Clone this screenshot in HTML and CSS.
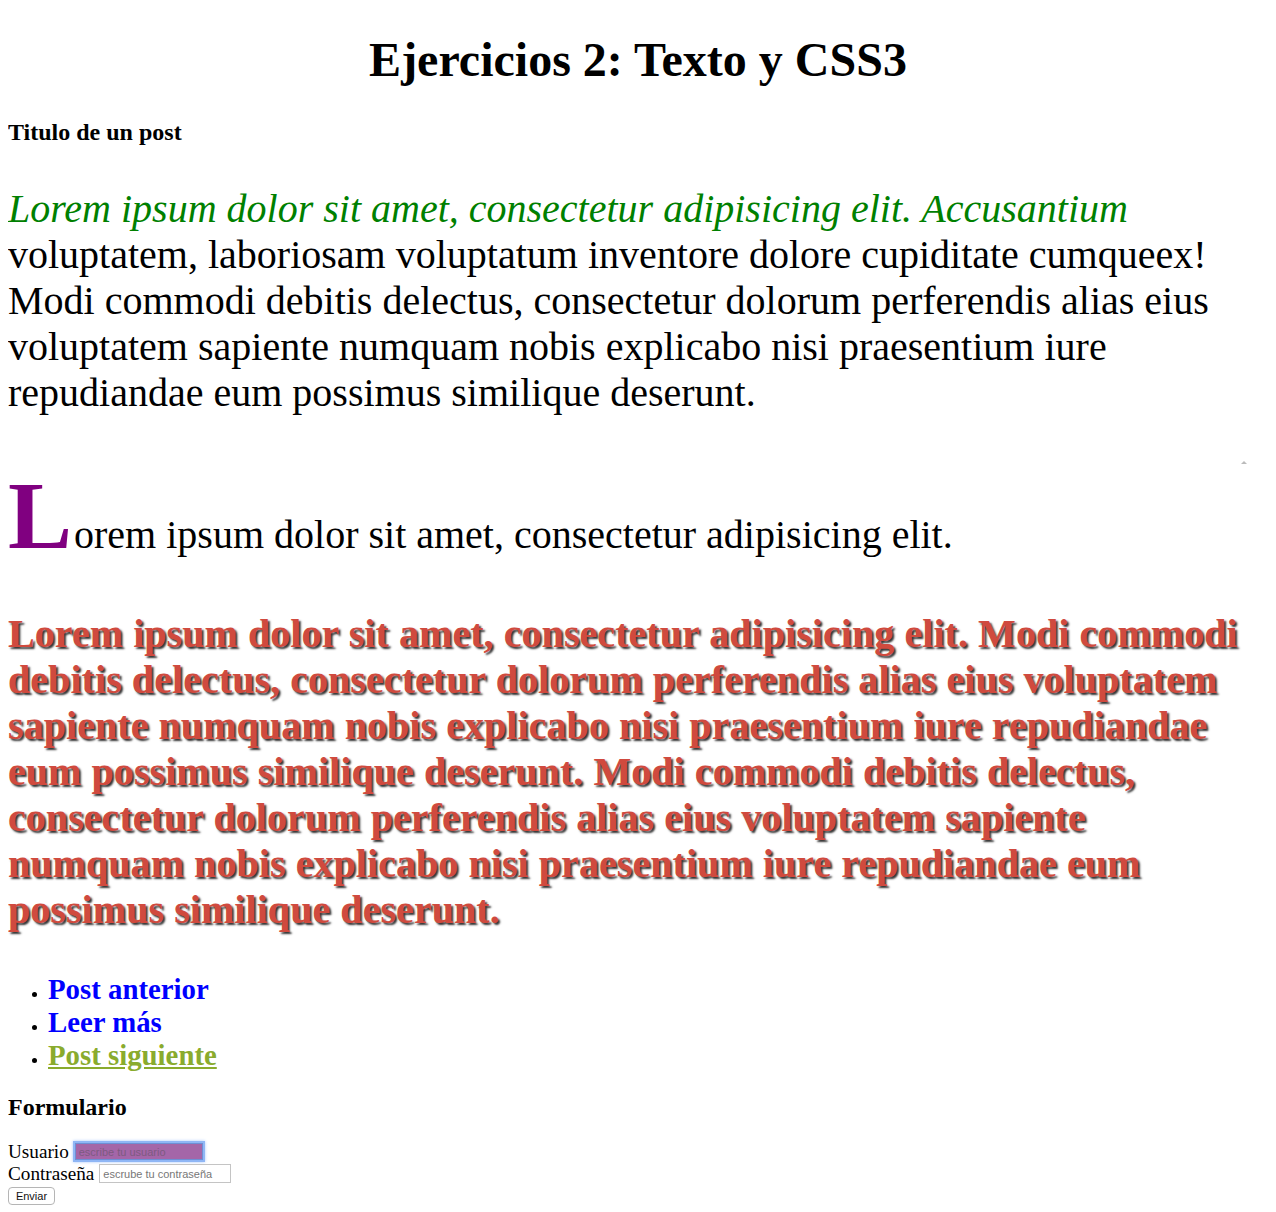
FILE: index.html
```html
<!DOCTYPE html>
<html lang="es">
<head>
<meta charset="utf-8">
<title>Ejercicios 2: Texto y CSS3</title>
<link rel="stylesheet" href="styles.css">
</head>
<body>
<h1 class="titulo">Ejercicios 2: Texto y CSS3</h1>
<h2 class="subtitulo">Titulo de un post</h2>
<p class="parrafo primera-linea">Lorem ipsum dolor sit amet, consectetur adipisicing elit. Accusantium voluptatem, laboriosam voluptatum inventore dolore cupiditate cumqueex! Modi commodi debitis delectus, consectetur dolorum perferendis alias eius voluptatem sapiente numquam nobis explicabo nisi praesentium iure repudiandae eum possimus similique deserunt.</p>
<p class="parrafo capitular">Lorem ipsum dolor sit amet, consectetur adipisicing elit.</p>
<p class="parrafo sombra">Lorem ipsum dolor sit amet, consectetur adipisicing elit. Modi commodi debitis delectus, consectetur dolorum perferendis alias eius voluptatem sapiente numquam nobis explicabo nisi praesentium iure repudiandae eum possimus similique deserunt. Modi commodi debitis delectus, consectetur dolorum perferendis alias eius voluptatem sapiente numquam nobis explicabo nisi praesentium iure repudiandae eum possimus similique deserunt.</p>
<ul class="enlaces">
  <li><a class="enlace" href="#">Post anterior</a></li>
  <li><a class="enlace" href="#">Leer más</a></li>
  <li><a class="enlace activo" href="#">Post siguiente</a></li>
</ul>
<form class="formulario">
  <h2 class="subtitulo">Formulario</h2>
  <div class="fila"><label class="etiqueta" for="usuario">Usuario</label> <input class="campo campo-usuario" id="usuario" type="text" placeholder="escribe tu usuario"></div>
  <div class="fila"><label class="etiqueta" for="clave">Contraseña</label> <input class="campo" id="clave" type="password" placeholder="escrube tu contraseña"></div>
  <div class="fila"><button class="boton" type="button">Enviar</button></div>
</form>
<span class="marca"></span>
</body>
</html>
```
FILE: styles.css
```css
html, body {
  background: #fff;
}
body {
  margin: 8px;
  font-family: "Liberation Serif", "Times New Roman", serif;
  font-size: 16px;
  color: #000;
}
.titulo {
  font-size: 48px;
  font-weight: bold;
  text-align: center;
  margin: 24px 0 32px;
}
.subtitulo {
  font-size: 24px;
  font-weight: bold;
  margin: 19.92px 0;
}
.parrafo {
  font-size: 40px;
  line-height: 46px;
  margin: 40px 0;
}
.primera-linea::first-line {
  color: #008000;
  font-style: italic;
}
.capitular {
  margin-top: 44px;
}
.capitular::first-letter {
  color: #800080;
  font-size: 96px;
  line-height: normal;
  font-weight: bold;
  padding-right: 2px;
}
.sombra {
  color: #d04a3e;
  font-weight: bold;
  letter-spacing: 0.06px;
  text-shadow: 2px 2px 2px #333;
}
.enlaces {
  margin: 16px 0 22px;
  padding-left: 40px;
}
.enlace {
  font-size: 28.8px;
  font-weight: bold;
  color: #0000ff;
  text-decoration: none;
}
.enlace.activo {
  color: #8aab2d;
  text-decoration: underline;
}
.formulario {
  margin: 0;
}
.fila {
  font-size: 19.2px;
  line-height: 22px;
  height: 22px;
  display: flex;
  align-items: center;
  gap: 5px;
}
.etiqueta {
  display: inline-block;
}
.campo {
  box-sizing: border-box;
  width: 132px;
  height: 19px;
  margin: 0;
  padding: 1px 3px;
  border: 1px solid #c4c4c4;
  font-family: "Liberation Sans", Arial, sans-serif;
  font-size: 11px;
  background: #fff;
  color: #000;
}
.campo::placeholder {
  color: #777;
}
.campo-usuario {
  width: 128px;
  height: 17px;
  margin-left: 1px;
  background: #a466a8;
  border: 1px solid #6d8fd4;
  box-shadow: 0 0 0 2px #8fb6f5, 0 0 3px 2px #a9c8fb;
}
.campo-usuario::placeholder {
  color: #7d5a80;
}
.boton {
  box-sizing: border-box;
  width: 47px;
  height: 18px;
  margin: 0;
  padding: 0 6px;
  font-family: "Liberation Sans", Arial, sans-serif;
  font-size: 11px;
  background: #fff;
  border: 1px solid #b5b5b5;
  border-radius: 4px;
  color: #111;
}
.marca {
  position: absolute;
  left: 1241px;
  top: 461px;
  width: 0;
  height: 0;
  border-left: 3px solid transparent;
  border-right: 3px solid transparent;
  border-bottom: 3px solid #bbb;
}
```
